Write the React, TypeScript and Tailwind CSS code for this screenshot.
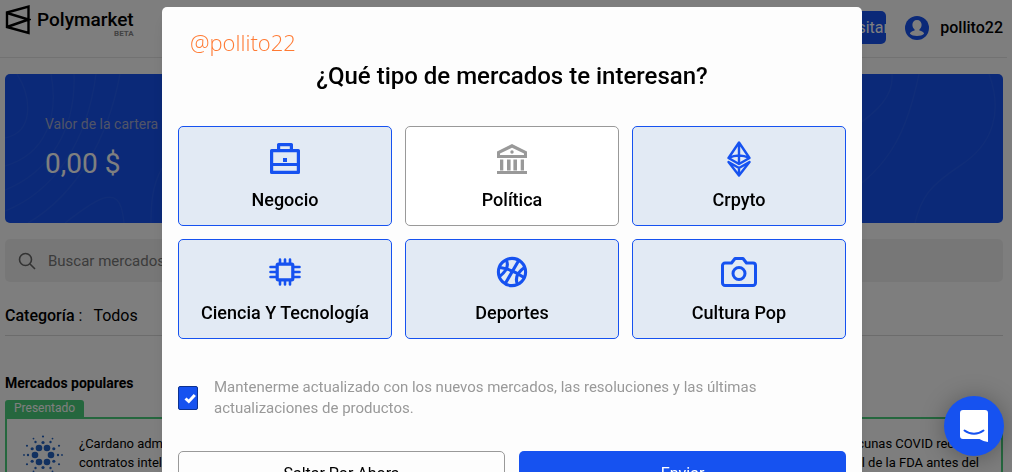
import { useState, type ReactNode } from "react";

const BusinessIcon = () => (
  <svg width="32" height="32" viewBox="0 0 32 32" fill="none" stroke="currentColor" strokeWidth="3.200" strokeLinejoin="round">
    <path d="M2.600 7.600h26.800v21.800H2.600zM2.600 21.500h26.800M9.600 7.600V1.600h12.800v6" />
    <rect x="14" y="15" width="4" height="4" fill="currentColor" stroke="none" />
  </svg>
);

const PoliticsIcon = () => (
  <svg width="32" height="32" viewBox="0 0 32 32" fill="currentColor">
    <path fillRule="evenodd" d="M16 1 31 8.500V15H1V8.500ZM16 4.800 4 10.600V12H28V10.600Z" />
    <circle cx="16" cy="9" r="1.700" />
    <path d="M4 16.500h3.300v11H4zM11 16.500h3.600v11H11zM17.400 16.500H21v11h-3.600zM24.700 16.500H28v11h-3.300zM1 28h30v3H1z" />
  </svg>
);

const CryptoIcon = () => (
  <svg width="26" height="36" viewBox="0 0 26 36" fill="none" stroke="currentColor" strokeWidth="2.400" strokeLinejoin="round">
    <path d="M13 1.500 2.500 17 13 23 23.500 17ZM13 2V23M2.500 17Q13 12 23.500 17" />
    <path d="M2.500 21 13 34.500 23.500 21 13 27ZM13 27V34" />
  </svg>
);

const TechIcon = () => (
  <svg width="32" height="30" viewBox="0 0 32 30" fill="none" stroke="currentColor" strokeLinecap="round">
    <rect x="8.200" y="7.200" width="15.600" height="15.600" rx="1" strokeWidth="3.200" />
    <path strokeWidth="2.600" d="M11 6V2.500M16 6V2.500M21 6V2.500M11 27.500V24M16 27.500V24M21 27.500V24M7 10H1.500M7 15H1.500M7 20H1.500M30.500 10H25M30.500 15H25M30.500 20H25" />
  </svg>
);

const SportsIcon = () => (
  <svg width="32" height="32" viewBox="0 0 32 32" fill="none" stroke="currentColor" strokeWidth="3.100">
    <circle cx="16" cy="16" r="13.600" />
    <path d="M23 4 9 28M4 11.500Q16 13 28 21.500M10.500 4.500Q14 12.500 3.500 20.500M28.500 11.500Q17.500 19 21.500 28.500" />
  </svg>
);

const CameraIcon = () => (
  <svg width="36" height="30" viewBox="0 0 36 30" fill="none" stroke="currentColor" strokeWidth="3" strokeLinejoin="round">
    <path d="M4 6h6.500L14 1.500h8L25.500 6H32a2.500 2.500 0 0 1 2.500 2.500V26a2.500 2.500 0 0 1-2.500 2.500H4A2.500 2.500 0 0 1 1.500 26V8.500A2.500 2.500 0 0 1 4 6Z" />
    <circle cx="18" cy="16.500" r="6" />
  </svg>
);

const Logo = () => (
  <svg width="26" height="32" viewBox="0 0 26 32" fill="none" stroke="currentColor" strokeWidth="2.400">
    <path d="M2 8.500 23.500 2.500V29L2 23ZM2 9 23.500 15.500 2 23" />
  </svg>
);

function Cardano() {
  const dots: { x: number; y: number; r: number }[] = [];
  const ring = (n: number, d: number, r: number, offset: number) => {
    for (let i = 0; i < n; i++) {
      const a = ((i * 360) / n + offset) * (Math.PI / 180);
      dots.push({ x: 20 + d * Math.cos(a), y: 20 + d * Math.sin(a), r });
    }
  };
  ring(6, 8, 3.3, 0);
  ring(6, 12.5, 1.6, 30);
  ring(6, 15, 1.2, 0);
  ring(6, 18.5, 1.1, 30);
  ring(6, 19, 0.9, 0);
  return (
    <svg className="shrink-0" width="40" height="40" viewBox="0 0 40 40" fill="#2563c0">
      {dots.map((p, i) => (
        <circle key={i} cx={p.x} cy={p.y} r={p.r} />
      ))}
    </svg>
  );
}

const topics: { id: string; label: string; icon: ReactNode }[] = [
  { id: "business", label: "Negocio", icon: <BusinessIcon /> },
  { id: "politics", label: "Política", icon: <PoliticsIcon /> },
  { id: "crypto", label: "Crpyto", icon: <CryptoIcon /> },
  { id: "tech", label: "Ciencia Y Tecnología", icon: <TechIcon /> },
  { id: "sports", label: "Deportes", icon: <SportsIcon /> },
  { id: "pop", label: "Cultura Pop", icon: <CameraIcon /> },
];

function Header() {
  return (
    <header className="flex h-[58px] items-start justify-between border-b border-[#e4e4e4] pr-1 pl-[5px]">
      <a href="#" className="flex items-start pt-1">
        <Logo />
        <span className="flex flex-col items-end pt-1 pl-[6px]">
          <span className="text-[19px] leading-6 font-medium">Polymarket</span>
          <span className="-mt-1 text-[8px] leading-3 font-bold text-[#858585]">BETA</span>
        </span>
      </a>
      <div className="flex items-center pt-[11px]">
        <button className="flex h-[33px] w-[100px] items-center overflow-hidden rounded-[5px] bg-[#1652f0] pl-[34px] text-base text-white">
          Depositar
        </button>
        <a href="#" className="flex items-center gap-[11px] pl-[19px]">
          <svg width="24" height="24" viewBox="0 0 24 24">
            <circle cx="12" cy="12" r="12" fill="#1652f0" />
            <path fill="#fdfdfd" d="M12 4c3 0 4.600 2.100 4.600 4.800 0 2-.9 3.700-2.200 4.700v1c2.500.6 4.300 1.500 4.700 3.300C17.500 19.300 15 20 12 20s-5.500-.7-7.100-2.200c.4-1.800 2.200-2.700 4.700-3.300v-1c-1.300-1-2.200-2.700-2.200-4.700C7.400 6.100 9 4 12 4Z" />
          </svg>
          <span className="text-base font-medium">pollito22</span>
        </a>
      </div>
    </header>
  );
}

function Portfolio() {
  return (
    <section className="relative isolate h-[149px] overflow-hidden rounded-[5px] bg-[#1652f0] pt-10 pl-10 text-white">
      <svg className="absolute top-0 left-0 -z-10" width="200" height="149" fill="none" stroke="#205af1" strokeWidth="1.500">
        <path d="M12 0C27 24 29 58 0 64M46 0C54 42 41 80 0 92M69 0C71 55 45 98 0 116M91 0C82 70 48 118 0 137M115 0C103 65 72 120 23 149M60 149C82 132 102 117 112 126C118 132 118 142 119 149M157 94C147 112 146 130 146 149" />
      </svg>
      <svg className="absolute top-0 right-0 -z-10" width="160" height="149" fill="none" stroke="#205af1" strokeWidth="1.500">
        <path d="M49 0C51 22 34 38 10 54M76 0C66 48 51 92 0 122M146 0C160 38 150 70 118 91S78 124 72 149" />
      </svg>
      <p className="text-sm leading-5 text-[#a2a9cf]">Valor de la cartera</p>
      <p className="pt-3 text-[28px] leading-9">0,00 $</p>
    </section>
  );
}

function Markets() {
  return (
    <section className="pt-[37px]">
      <h2 className="text-sm leading-5 font-bold">Mercados populares</h2>
      <div className="mt-[7px] flex">
        <span className="h-[17px] rounded-t-[3px] bg-[#4bce7c] px-[9px] text-xs leading-[17px] text-white">Presentado</span>
      </div>
      <div className="grid grid-cols-2 gap-4">
        <article className="flex h-32 gap-4 rounded-tr border-2 border-[#4bce7c] pt-[15px] pl-4">
          <div className="pt-px"><Cardano /></div>
          <p className="text-[13px] leading-[19px]">¿Cardano admitirá<br />contratos inteligentes?</p>
        </article>
        <article className="h-32 rounded border-2 border-[#4bce7c] pt-[15px] pr-[22px]">
          <p className="text-right text-[13px] leading-[19px]">¿Alguna de las vacunas COVID recibirá<br />la aprobación total de la FDA antes del</p>
        </article>
      </div>
    </section>
  );
}

function InterestsDialog() {
  const [selected, setSelected] = useState<string[]>(["business", "crypto", "tech", "sports", "pop"]);
  const toggle = (id: string) =>
    setSelected((s) => (s.includes(id) ? s.filter((x) => x !== id) : [...s, id]));

  return (
    <div className="fixed inset-0 overflow-hidden bg-black/50 pt-[7px] pl-3">
      <div role="dialog" aria-modal="true" aria-labelledby="interests-title" className="mx-auto max-w-[700px] rounded-[5px] bg-[#fdfdfd] px-4 pt-[17px] pb-4 shadow-lg">
        <p className="pl-3 font-['Open_Sans',sans-serif] text-[22px] leading-9 font-light text-[#ff7a33]">@pollito22</p>
        <h1 id="interests-title" className="text-center text-2xl leading-8 font-medium">¿Qué tipo de mercados te interesan?</h1>
        <div className="grid grid-cols-3 gap-[13px] pt-[34px]">
          {topics.map((t) => {
            const on = selected.includes(t.id);
            return (
              <button
                key={t.id}
                aria-pressed={on}
                onClick={() => toggle(t.id)}
                className={`flex h-[100px] flex-col items-center rounded-[5px] border pt-3 ${on ? "border-[#1652f0] bg-[#e2eaf4]" : "border-[#999] bg-white"}`}
              >
                <span className={`flex h-10 items-center ${on ? "text-[#1652f0]" : "text-[#999]"}`}>{t.icon}</span>
                <span className="pt-[9px] text-lg leading-6 font-medium">{t.label}</span>
              </button>
            );
          })}
        </div>
        <div className="flex items-center gap-4 pt-[38px]">
          <span className="relative flex shrink-0">
            <input id="updates" type="checkbox" defaultChecked className="peer h-6 w-5 appearance-none rounded-[2px] border border-[#0d3190] bg-white checked:bg-[#1652f0]" />
            <svg className="pointer-events-none absolute top-[7px] left-[6px] hidden peer-checked:block" width="12" height="11" viewBox="0 0 12 11" fill="none" stroke="#fff" strokeWidth="3">
              <path d="M1.500 5.500 4.800 8.500 10.800 2" />
            </svg>
          </span>
          <label htmlFor="updates" className="pr-12 text-[15px] leading-[21px] text-[#999]">
            Mantenerme actualizado con los nuevos mercados, las resoluciones y las últimas actualizaciones de productos.
          </label>
        </div>
        <div className="grid grid-cols-2 gap-[14px] pt-8">
          <button className="h-[46px] rounded-[5px] border border-[#999] text-base">Saltar Por Ahora</button>
          <button className="h-[46px] rounded-[5px] bg-[#1652f0] text-base text-white">Enviar</button>
        </div>
      </div>
    </div>
  );
}

export default function App() {
  return (
    <div className="h-screen overflow-hidden bg-[#fdfdfd] pr-[5px] font-[Roboto,sans-serif] text-black">
      <Header />
      <main className="pt-4 pr-1 pl-[5px]">
        <Portfolio />
        <div className="mt-4 flex h-[43px] items-center gap-3 rounded-[5px] bg-[#efefef] px-[13px]">
          <svg width="18" height="18" viewBox="0 0 18 18" fill="none" stroke="#666" strokeWidth="1.600">
            <circle cx="7.500" cy="7.500" r="6" />
            <path d="m12 12 5 5" />
          </svg>
          <input aria-label="Buscar mercados" placeholder="Buscar mercados" className="flex-1 bg-transparent pt-[2px] text-[15px] outline-none placeholder:text-[#777]" />
        </div>
        <div className="flex h-[54px] items-center gap-[11px] border-b border-[#d8d8d8] pt-[14px] text-base">
          <span><span className="font-medium">Categoría</span> :</span>
          <span>Todos</span>
        </div>
        <Markets />
      </main>
      <InterestsDialog />
      <button aria-label="Chat" className="fixed right-2 bottom-4 flex h-[60px] w-[60px] items-center justify-center rounded-full bg-[#1652f0] shadow-[0_2px_24px_rgba(0,0,0,0.3)]">
        <svg width="28" height="32" viewBox="0 0 28 32">
          <path fill="#fff" d="M3 0h22a3 3 0 0 1 3 3v29c-3-.4-6-1.500-8.500-3H3a3 3 0 0 1-3-3V3a3 3 0 0 1 3-3Z" />
          <path d="M4.500 20.500c5.500 4.200 13.500 4.200 19 0" fill="none" stroke="#1652f0" strokeWidth="2" strokeLinecap="round" />
        </svg>
      </button>
    </div>
  );
}
